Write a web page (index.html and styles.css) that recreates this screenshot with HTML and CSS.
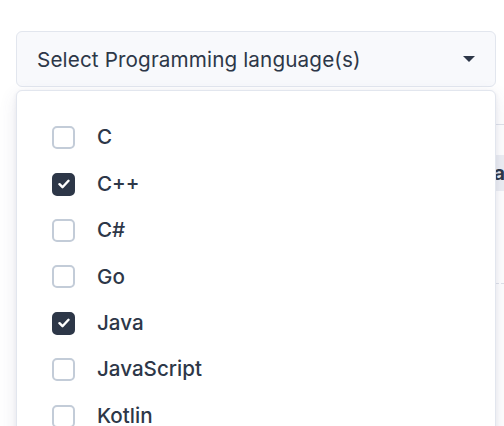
FILE: index.html
```html
<!DOCTYPE html>
<html lang="en">
<head>
<meta charset="utf-8">
<title>Languages</title>
<link rel="stylesheet" href="styles.css">
</head>
<body>
<div class="page">
  <div class="select-wrap">
    <button class="select" type="button">
      <span class="select-label">Select Programming language(s)</span>
      <svg class="caret" width="12" height="6" viewBox="0 0 12 6"><path d="M0 0h12L6 6z" fill="#2d3748"/></svg>
    </button>
    <div class="menu">
      <ul class="options">
        <li class="option"><span class="box"></span><span class="name">C</span></li>
        <li class="option"><span class="box checked"><svg width="12" height="10" viewBox="0 0 12 10"><path d="M1.5 5.2l3 3 6-6.4" fill="none" stroke="#fff" stroke-width="2.4" stroke-linecap="round" stroke-linejoin="round"/></svg></span><span class="name">C++</span></li>
        <li class="option"><span class="box"></span><span class="name">C#</span></li>
        <li class="option"><span class="box"></span><span class="name">Go</span></li>
        <li class="option"><span class="box checked"><svg width="12" height="10" viewBox="0 0 12 10"><path d="M1.5 5.2l3 3 6-6.4" fill="none" stroke="#fff" stroke-width="2.4" stroke-linecap="round" stroke-linejoin="round"/></svg></span><span class="name">Java</span></li>
        <li class="option"><span class="box"></span><span class="name">JavaScript</span></li>
        <li class="option"><span class="box"></span><span class="name">Kotlin</span></li>
      </ul>
    </div>
  </div>
  <div class="data">
    <div class="data-top"></div>
    <div class="data-head"><span class="data-title">Data</span></div>
    <div class="data-row"></div>
  </div>
</div>
</body>
</html>
```

FILE: styles.css
```css
html, body {
  margin: 0;
  padding: 0;
  background: #ffffff;
  overflow: hidden;
  height: 426px;
}

body {
  font-family: Inter, "Noto Sans", sans-serif;
  color: #2d3748;
}

.page {
  padding: 31px 0 0 16px;
}

.select-wrap {
  position: relative;
  width: 480px;
  z-index: 2;
}

.select {
  box-sizing: border-box;
  width: 480px;
  height: 56px;
  display: flex;
  align-items: center;
  justify-content: space-between;
  padding: 0 20px 0 20px;
  background: #f8f9fc;
  border: 1px solid #e2e6ee;
  border-radius: 6px;
  font-family: inherit;
  font-size: 20.7px;
  letter-spacing: 0.12px;
  color: #2d3748;
  cursor: pointer;
}

.caret {
  display: block;
}

.menu {
  position: absolute;
  top: 59px;
  left: 0;
  width: 480px;
  box-sizing: border-box;
  height: 420px;
  background: #ffffff;
  border: 1px solid #e2e6ee;
  border-radius: 6px;
  box-shadow: 0 6px 18px rgba(70, 70, 120, 0.12), 0 1px 4px rgba(70, 70, 120, 0.08);
}

.options {
  list-style: none;
  margin: 0;
  padding: 23.5px 0 0 35px;
}

.option {
  display: flex;
  align-items: center;
  height: 46.4px;
  font-size: 20.6px;
  font-weight: 500;
}

.box {
  box-sizing: border-box;
  width: 23px;
  height: 23px;
  border: 2px solid #c3ccd8;
  border-radius: 5px;
  display: flex;
  align-items: center;
  justify-content: center;
  margin-right: 22px;
}

.box.checked {
  background: #2d3748;
  border-color: #2d3748;
}

.name {
  line-height: 1;
}

/* table area sitting under the open menu */
.data {
  margin-top: 37px;
  width: 488px;
}

.data-top {
  height: 30px;
  border-top: 1px solid #dfe3ea;
}

.data-head {
  height: 36px;
  background: #edeff4;
  display: flex;
  align-items: center;
  justify-content: flex-end;
  font-size: 20px;
  font-weight: 700;
}

.data-title {
  margin-right: -1px;
}

.data-row {
  height: 92px;
  border-bottom: 1px dashed #dfe3ea;
}
```
